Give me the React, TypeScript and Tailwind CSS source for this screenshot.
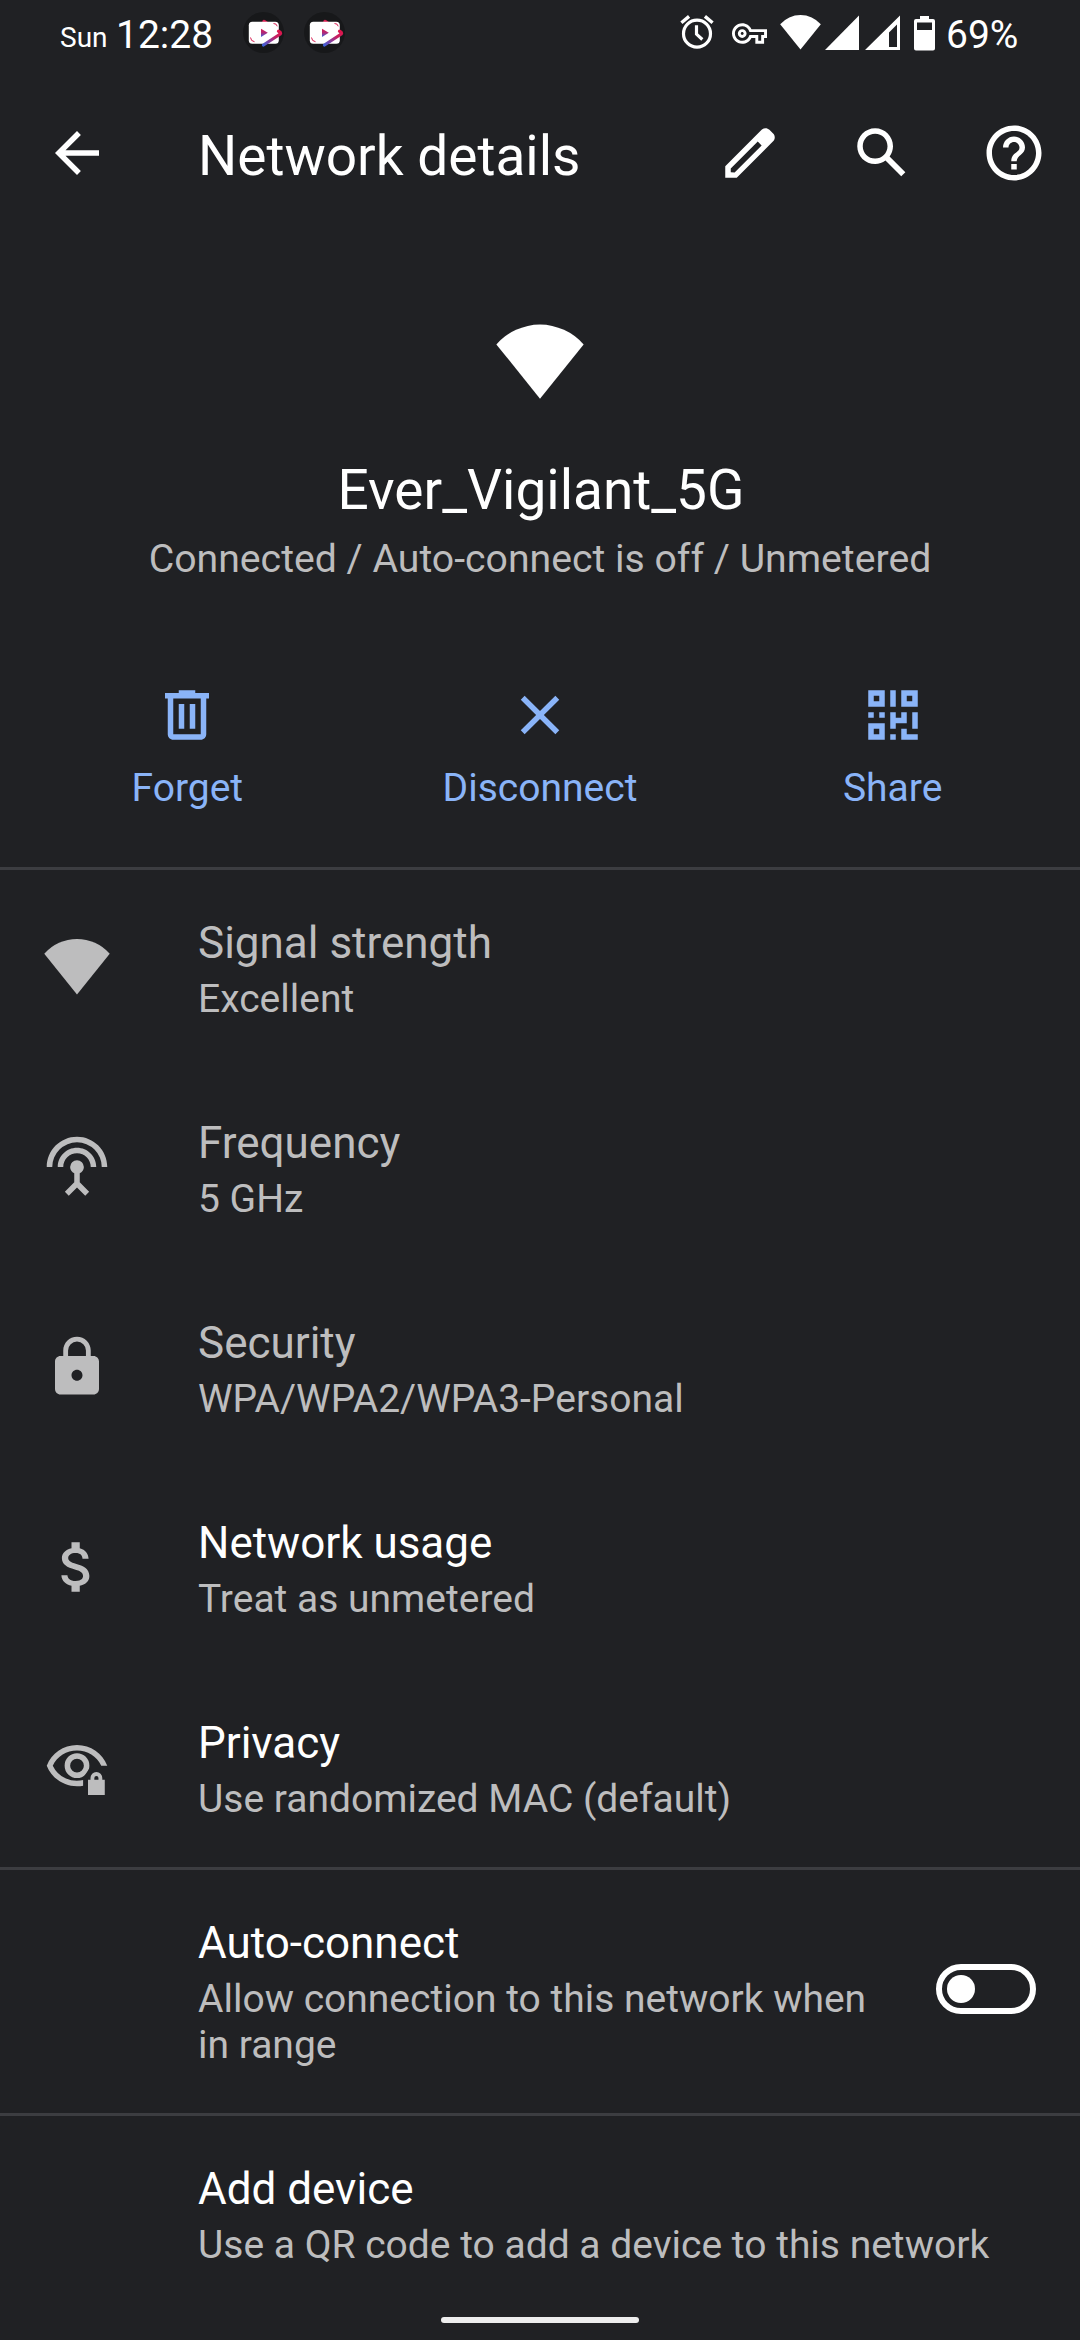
import type { ReactNode } from "react";

const WIFI = "M12 22 23.9 7.2A15.8 15.8 0 0 0 .1 7.2z";

function Icon({ className = "size-[66px]", children }: { className?: string; children: ReactNode }) {
  return (
    <svg viewBox="0 0 24 24" fill="currentColor" className={`block shrink-0 ${className}`}>
      {children}
    </svg>
  );
}

function AppBadge({ id }: { id: string }) {
  return (
    <svg viewBox="0 0 41 41" className="block size-[41px]">
      <defs>
        <linearGradient id={id} gradientUnits="userSpaceOnUse" x1="34" y1="16" x2="20" y2="34">
          <stop offset="0" stopColor="#e0154a" />
          <stop offset=".35" stopColor="#c41f63" />
          <stop offset="1" stopColor="#3a63e0" />
        </linearGradient>
        <linearGradient id={`${id}-play`} x1="0" y1="0" x2="0" y2="1">
          <stop offset="0" stopColor="#d81b54" />
          <stop offset=".5" stopColor="#b02a78" />
          <stop offset="1" stopColor="#3a63e0" />
        </linearGradient>
      </defs>
      <circle cx="20.5" cy="20.5" r="20.5" fill="#17181a" />
      <path d="M21 9.500 37 20.500" fill="none" stroke="#d81f52" strokeWidth="3.400" strokeLinecap="round" />
      <rect x="5.800" y="9.700" width="30" height="22" rx="3.500" fill="#fff" />
      <path d="M35.500 19.300 37.300 20.700a1 1 0 0 1 0 1.300L20.500 33" fill="none" stroke={`url(#${id})`} strokeWidth="3.200" strokeLinecap="round" strokeLinejoin="round" />
      <path d="M7.500 25.500q.3 3.800 4 4.200M30.500 11.500q3.300 0 3.700 2.800" fill="none" stroke="#d81f52" strokeWidth="1" />
      <path d="M18 16.700v8.300l6.800-4.200z" fill={`url(#${id}-play)`} />
    </svg>
  );
}

function StatusBar() {
  return (
    <div className="flex h-[66px] items-start text-white">
      <div className="flex w-[243px] shrink-0 pl-[60px]">
        <span className="mt-[21px] w-[56px] text-[28px] leading-[34px]">Sun</span>
        <span className="mt-[12px] text-[39px] leading-[46px]">12:28</span>
      </div>
      <div className="mt-[12px] flex gap-[20px]">
        <AppBadge id="badge-a" />
        <AppBadge id="badge-b" />
      </div>
      <div className="ml-auto flex w-[403px] shrink-0">
        <Icon className="mt-[12px] size-[40px]">
          <path d="M22 5.720l-4.600-3.860-1.290 1.530 4.600 3.860zM7.880 3.390 6.600 1.860 2 5.710l1.290 1.530z" />
          <circle cx="12" cy="13" r="8.100" fill="none" stroke="currentColor" strokeWidth="1.900" />
          <path d="M11.700 8v5.300l3.500 3.200" fill="none" stroke="currentColor" strokeWidth="1.900" />
        </Icon>
        <Icon className="ml-[15px] mt-[16px] size-[35px]">
          <path d="M22 19h-6v-4h-2.680c-1.140 2.420-3.600 4-6.320 4-3.860 0-7-3.140-7-7s3.140-7 7-7c2.720 0 5.170 1.580 6.320 4H24v6h-2v4zm-4-2h2v-4h2v-2H11.940l-.23-.67C11.010 8.340 9.110 7 7 7c-2.760 0-5 2.240-5 5s2.240 5 5 5c2.110 0 4.010-1.340 4.710-3.330l.23-.67H18v4zM7 15c-1.650 0-3-1.350-3-3s1.350-3 3-3 3 1.350 3 3-1.350 3-3 3zm0-4c-.55 0-1 .45-1 1s.45 1 1 1 1-.45 1-1-.45-1-1-1z" />
        </Icon>
        <Icon className="ml-[13px] mt-[12px] size-[41px]">
          <path d={WIFI} />
        </Icon>
        <svg viewBox="0 0 34 35" fill="currentColor" className="ml-[4px] mt-[15px] h-[35px] w-[34px] shrink-0">
          <path d="M34 .5v34.500H0z" />
        </svg>
        <svg viewBox="0 0 35 35" fill="currentColor" className="ml-[6px] mt-[15px] h-[35px] w-[35px] shrink-0">
          <path fillRule="evenodd" d="M35 .5v34.500H0zM32 9.500 24 17.500v14.500h8z" />
        </svg>
        <svg viewBox="0 0 21 35" fill="currentColor" className="ml-[14px] mt-[16px] h-[35px] w-[21px] shrink-0">
          <path fillRule="evenodd" d="M6 0h9v3h4q2 0 2 2v27.500q0 2-2 2H2q-2 0-2-2V5q0-2 2-2h4zM3 6.500v7.500h15V6.500z" />
        </svg>
        <span className="ml-[11px] mt-[12px] text-[39px] leading-[46px]">69%</span>
      </div>
    </div>
  );
}

function AppBar() {
  return (
    <header className="flex h-[174px] items-center pl-[44px] pr-[33px] text-white">
      <Icon>
        <path d="M20 11H7.830l5.590-5.590L12 4l-8 8 8 8 1.410-1.410L7.830 13H20z" />
      </Icon>
      <h1 className="ml-[88px] flex-1 pt-[6px] text-[55px] leading-[64px]">Network details</h1>
      <div className="flex gap-[66px]">
        <Icon>
          <path d="M20.410 4.940l-1.350-1.350c-.78-.78-2.050-.78-2.830 0L3 16.820V21h4.180L20.410 7.770c.79-.78.79-2.050 0-2.830zM6.410 19.060 5 19v-1.360l9.820-9.820 1.410 1.410z" />
        </Icon>
        <Icon>
          <path d="M20.490 19l-5.730-5.730C15.530 12.200 16 10.910 16 9.500 16 5.910 13.090 3 9.500 3S3 5.910 3 9.500 5.910 16 9.500 16c1.410 0 2.700-.47 3.770-1.240L19 20.490zM5 9.500C5 7.010 7.010 5 9.500 5S14 7.010 14 9.500 11.990 14 9.500 14 5 11.990 5 9.500z" />
        </Icon>
        <Icon>
          <path d="M11 18h2v-2h-2v2zm1-16C6.480 2 2 6.480 2 12s4.480 10 10 10 10-4.480 10-10S17.520 2 12 2zm0 18c-4.410 0-8-3.590-8-8s3.590-8 8-8 8 3.590 8 8-3.590 8-8 8zm0-14c-2.210 0-4 1.790-4 4h2c0-1.100.9-2 2-2s2 .9 2 2c0 2-3 1.750-3 5h2c0-2.250 3-2.500 3-5 0-2.210-1.790-4-4-4z" />
        </Icon>
      </div>
    </header>
  );
}

function Hero() {
  return (
    <section className="flex flex-col items-center pt-[78px]">
      <Icon className="size-[88px] text-white">
        <path d={WIFI} />
      </Icon>
      <h2 className="mt-[52px] pl-[2px] text-[55px] leading-[64px] text-white">Ever_Vigilant_5G</h2>
      <p className="mt-[14px] text-[39.200px] leading-[46px] text-[#bdbdbe]">Connected / Auto-connect is off / Unmetered</p>
    </section>
  );
}

function Action({ label, children }: { label: string; children: ReactNode }) {
  return (
    <button className="flex flex-col items-center">
      <Icon>{children}</Icon>
      <span className="mt-[17px] text-[39px] leading-[46px]">{label}</span>
    </button>
  );
}

function Actions() {
  return (
    <section className="mt-[100px] grid h-[185px] grid-cols-3 items-start px-[11px] text-[#8ab4f8]">
      <Action label="Forget">
        <path d="M15 4V3H9v1H4v2h1v13c0 1.100.9 2 2 2h10c1.100 0 2-.9 2-2V6h1V4zm2 15H7V6h10zM9 8h2v9H9zM13 8h2v9h-2z" />
      </Action>
      <Action label="Disconnect">
        <path d="M19 6.410 17.590 5 12 10.590 6.410 5 5 6.410 10.590 12 5 17.590 6.410 19 12 13.410 17.590 19 19 17.590 13.410 12z" />
      </Action>
      <Action label="Share">
        <path
          fillRule="evenodd"
          d="M3 3h6v6H3zM5 5v2h2V5zM15 3h6v6h-6zM17 5v2h2V5zM3 15h6v6H3zM5 17v2h2v-2zM11 3h2v6h-2zM3 11h2v2H3zM7 11h2v2H7zM11 11h2v2h2v-2h2v4h-4v2h-2zM19 11h2v6h-2zM15 17h2v2h4v2h-6zM11 19h2v2h-2z"
        />
      </Action>
    </section>
  );
}

interface RowProps {
  title: string;
  summary: string;
  muted?: boolean;
  divided?: boolean;
  icon?: ReactNode;
  trailing?: ReactNode;
}

function Row({ title, summary, muted, divided, icon, trailing }: RowProps) {
  return (
    <div className={`flex items-center pr-[44px] ${divided ? "border-t-[3px] border-[#3c3d41] pb-[45px] pt-[47px]" : "pb-[45px] pt-[50px]"}`}>
      <div className="-mt-[5px] ml-[44px] mr-[88px] w-[66px] shrink-0 text-[#bdbdbe]">{icon && <Icon>{icon}</Icon>}</div>
      <div className="min-w-0 flex-1">
        <div className={`text-[44px] leading-[52px] ${muted ? "text-[#bdbdbe]" : "text-white"}`}>{title}</div>
        <div className="mt-[7px] text-[39px] leading-[46px] text-[#bdbdbe]">{summary}</div>
      </div>
      {trailing}
    </div>
  );
}

function Toggle() {
  return (
    <div className="-mt-[7px] ml-[44px] flex h-[50px] w-[100px] shrink-0 items-center rounded-full border-[6px] border-white pl-[5px]">
      <div className="size-[28px] rounded-full bg-white" />
    </div>
  );
}

export default function App() {
  return (
    <div className="flex h-[2340px] w-[1080px] flex-col overflow-hidden bg-[#202124] font-[Roboto,sans-serif]">
      <StatusBar />
      <AppBar />
      <Hero />
      <Actions />
      <Row muted divided title="Signal strength" summary="Excellent" icon={<path d={WIFI} />} />
      <Row
        muted
        title="Frequency"
        summary="5 GHz"
        icon={
          <path d="M12 5c-3.870 0-7 3.130-7 7h2c0-2.760 2.240-5 5-5s5 2.240 5 5h2c0-3.870-3.130-7-7-7zm1 9.290c.88-.39 1.500-1.260 1.500-2.290a2.500 2.500 0 0 0-5 0c0 1.020.62 1.900 1.500 2.290v3.300L7.590 21 9 22.410l3-3 3 3L16.410 21 13 17.590zM12 1C5.930 1 1 5.930 1 12h2a9 9 0 0 1 18 0h2c0-6.070-4.930-11-11-11z" />
        }
      />
      <Row
        muted
        title="Security"
        summary="WPA/WPA2/WPA3-Personal"
        icon={
          <path d="M18 8h-1V6c0-2.760-2.240-5-5-5S7 3.240 7 6v2H6c-1.100 0-2 .9-2 2v10c0 1.100.9 2 2 2h12c1.100 0 2-.9 2-2V10c0-1.100-.9-2-2-2zm-6 9c-1.100 0-2-.9-2-2s.9-2 2-2 2 .9 2 2-.9 2-2 2zm3.250-9h-6.500V6a3.250 3.250 0 0 1 6.500 0z" />
        }
      />
      <Row
        title="Network usage"
        summary="Treat as unmetered"
        icon={
          <path d="M11.800 10.900c-2.270-.59-3-1.200-3-2.150 0-1.090 1.010-1.850 2.700-1.850 1.780 0 2.440.85 2.500 2.100h2.210c-.07-1.720-1.120-3.300-3.210-3.810V3h-3v2.160c-1.940.42-3.500 1.680-3.500 3.610 0 2.310 1.910 3.460 4.700 4.130 2.500.6 3 1.480 3 2.410 0 .69-.49 1.790-2.700 1.790-2.060 0-2.870-.92-2.980-2.100h-2.200c.12 2.190 1.760 3.420 3.680 3.830V21h3v-2.150c1.950-.37 3.500-1.500 3.500-3.550 0-2.840-2.430-3.810-4.700-4.400z" />
        }
      />
      <Row
        title="Privacy"
        summary="Use randomized MAC (default)"
        icon={
          <>
            <clipPath id="eye-cut">
              <path d="M0 0h24v11.500l-7.500 1-2.200 3.300V24H0z" />
            </clipPath>
            <g clipPath="url(#eye-cut)">
              <path d="M3.180 11.500C4.830 8.130 8.210 6 12 6s7.170 2.130 8.820 5.500H23C21.270 7.110 17 4 12 4S2.730 7.110 1 11.500C2.730 15.890 7 19 12 19c.8 0 1.600-.08 2.300-.2v-2.050A9.770 9.770 0 0 1 3.180 11.500z" />
              <circle cx="12" cy="11.500" r="3.500" fill="none" stroke="currentColor" strokeWidth="2" />
            </g>
            <path fillRule="evenodd" d="M16 16.600h.9V16a2.150 2.150 0 0 1 4.300 0v.6h.9v5.600H16zm2.300 0h1.500V16a.75.75 0 0 0-1.500 0z" />
          </>
        }
      />
      <Row divided title="Auto-connect" summary="Allow connection to this network when in range" trailing={<Toggle />} />
      <Row divided title="Add device" summary="Use a QR code to add a device to this network" />
      <div className="mt-[4px] flex justify-center">
        <div className="h-[6px] w-[198px] rounded-full bg-[#ededed]" />
      </div>
    </div>
  );
}
